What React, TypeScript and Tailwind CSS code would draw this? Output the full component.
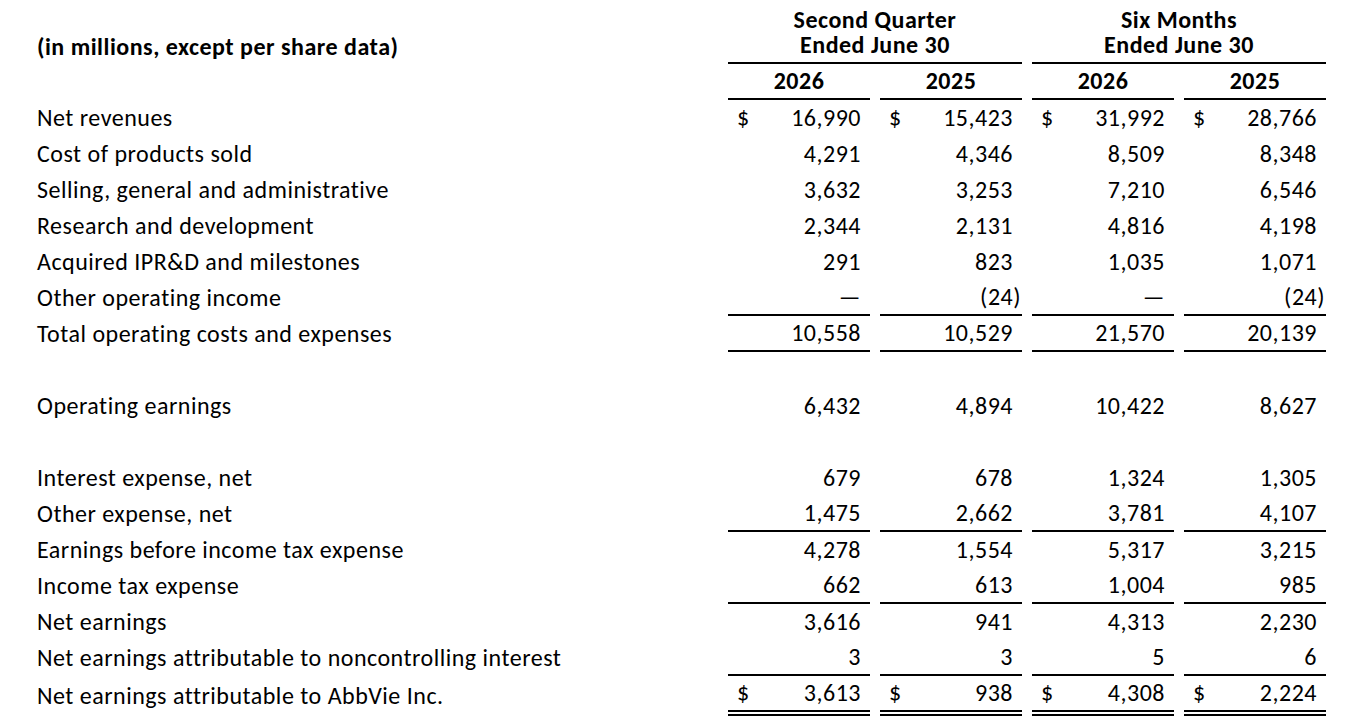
import React from "react";

type Row = {
  label?: string;
  values?: string[];
  dollar?: boolean;
  line?: "single" | "double";
};

const rows: Row[] = [
  { label: "Net revenues", values: ["16,990", "15,423", "31,992", "28,766"], dollar: true },
  { label: "Cost of products sold", values: ["4,291", "4,346", "8,509", "8,348"] },
  { label: "Selling, general and administrative", values: ["3,632", "3,253", "7,210", "6,546"] },
  { label: "Research and development", values: ["2,344", "2,131", "4,816", "4,198"] },
  { label: "Acquired IPR&D and milestones", values: ["291", "823", "1,035", "1,071"] },
  { label: "Other operating income", values: ["—", "(24)", "—", "(24)"], line: "single" },
  { label: "Total operating costs and expenses", values: ["10,558", "10,529", "21,570", "20,139"], line: "single" },
  {},
  { label: "Operating earnings", values: ["6,432", "4,894", "10,422", "8,627"] },
  {},
  { label: "Interest expense, net", values: ["679", "678", "1,324", "1,305"] },
  { label: "Other expense, net", values: ["1,475", "2,662", "3,781", "4,107"], line: "single" },
  { label: "Earnings before income tax expense", values: ["4,278", "1,554", "5,317", "3,215"] },
  { label: "Income tax expense", values: ["662", "613", "1,004", "985"], line: "single" },
  { label: "Net earnings", values: ["3,616", "941", "4,313", "2,230"] },
  { label: "Net earnings attributable to noncontrolling interest", values: ["3", "3", "5", "6"], line: "single" },
  { label: "Net earnings attributable to AbbVie Inc.", values: ["3,613", "938", "4,308", "2,224"], dollar: true, line: "double" },
];

const Amount = ({ value }: { value: string }) => {
  // negative numbers hang their closing paren into the cell padding
  if (value.startsWith("(")) {
    return (
      <span>
        {value.slice(0, -1)}
        <span className="-mr-[8px]">)</span>
      </span>
    );
  }
  return <span>{value}</span>;
};

const App = () => {
  return (
    <div
      className="min-h-screen bg-white text-black text-[24px] tracking-[0.5px] pl-[37px] pt-0"
      style={{ fontFamily: "Carlito, Calibri, Lato, 'Noto Sans', sans-serif" }}
    >
      <div className="grid grid-cols-[681px_142px_142px_142px_142px] gap-x-[10px]">
        {/* Header */}
        <div className="h-[64px] flex items-end pb-[5px] font-bold leading-[25px]">
          (in millions, except per share data)
        </div>
        <div className="col-span-2 h-[64px] flex flex-col items-center justify-end pb-[5px] border-b-2 border-black font-bold leading-[25px]">
          <span>Second Quarter</span>
          <span>Ended June 30</span>
        </div>
        <div className="col-span-2 h-[64px] flex flex-col items-center justify-end pb-[5px] border-b-2 border-black font-bold leading-[25px]">
          <span>Six Months</span>
          <span>Ended June 30</span>
        </div>

        <div className="h-[36px]" />
        {["2026", "2025", "2026", "2025"].map((year, i) => (
          <div key={i} className="h-[36px] flex items-center justify-center border-b-2 border-black font-bold">
            {year}
          </div>
        ))}

        {/* Body */}
        {rows.map((row, r) => {
          const h = row.line === "double" ? "h-[40px]" : "h-[36px]";
          const border =
            row.line === "double"
              ? "border-b-[6px] border-double border-black"
              : row.line === "single"
              ? "border-b-2 border-black"
              : "";
          return (
            <React.Fragment key={r}>
              <div className={`${h} flex items-center`}>{row.label}</div>
              {[0, 1, 2, 3].map((c) => (
                <div key={c} className={`${h} ${border} flex items-center justify-between px-[9px]`}>
                  <span>{row.dollar ? "$" : ""}</span>
                  {row.values && <Amount value={row.values[c]} />}
                </div>
              ))}
            </React.Fragment>
          );
        })}
      </div>
    </div>
  );
};

export default App;
